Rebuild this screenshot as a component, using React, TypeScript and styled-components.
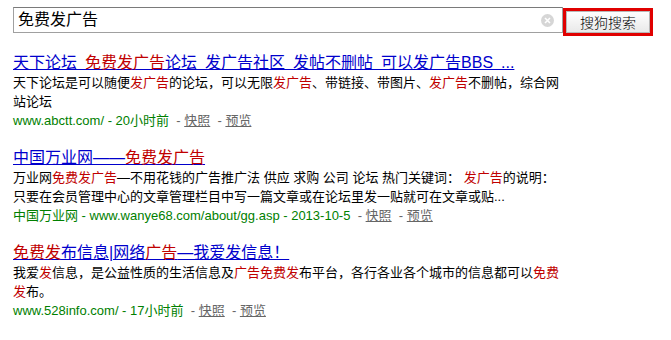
import React from 'react';
import styled, { createGlobalStyle } from 'styled-components';

const GlobalStyle = createGlobalStyle`
  html, body {
    margin: 0;
    padding: 0;
    background: #ffffff;
  }
  body {
    font-family: "Liberation Sans", Arial, "Noto Sans CJK SC", sans-serif;
    color: #000000;
  }
`;

const Page = styled.div`
  width: 671px;
  height: 340px;
  box-sizing: border-box;
  padding: 7px 0 0 13px;
  overflow: hidden;
`;

const SearchBar = styled.div`
  display: flex;
  align-items: flex-start;
  height: 30px;
`;

const InputWrap = styled.div`
  position: relative;
  width: 550px;
  height: 26px;
  box-sizing: border-box;
  border: 1px solid #a0a0a0;
  border-top-color: #7a7a7a;
  display: flex;
  align-items: center;
  padding-left: 4px;
`;

const Query = styled.span`
  font-size: 16px;
  line-height: 24px;
  color: #000;
`;

const Clear = styled.span`
  position: absolute;
  right: 8px;
  top: 6px;
  width: 13px;
  height: 13px;
  border-radius: 50%;
  background: #d6d6d6;
  display: flex;
  align-items: center;
  justify-content: center;
`;

const SearchButton = styled.button`
  margin-top: 1px;
  width: 90px;
  height: 28px;
  box-sizing: border-box;
  border: 3px solid #e00000;
  padding: 0;
  background: linear-gradient(#ffffff, #e8e8e8);
  box-shadow: inset 0 0 0 1px #b8b8b8;
  font-family: "Liberation Sans", "Noto Sans CJK SC", sans-serif;
  font-size: 14px;
  font-weight: 300;
  color: #000;
  cursor: pointer;
`;

const Results = styled.div`
  margin-top: 16px;
  display: flex;
  flex-direction: column;
  gap: 18px;
`;

const Result = styled.div`
  display: flex;
  flex-direction: column;
`;

const Title = styled.a`
  align-self: flex-start;
  font-size: 16px;
  line-height: 20px;
  color: #0000cc;
  text-decoration: underline;
  white-space: pre;
`;

const Em = styled.span`
  color: #c00000;
`;

const Snippet = styled.div`
  font-size: 13px;
  line-height: 19px;
  color: #000;
  white-space: pre;
`;

const Meta = styled.div`
  font-size: 13px;
  line-height: 19px;
  color: #008000;
  white-space: pre;
`;

const Sep = styled.span`
  color: #666;
`;

const MetaLink = styled.a`
  color: #666;
  text-decoration: underline;
`;

type Part = string | { em: string };

const renderParts = (parts: Part[]) =>
  parts.map((p, i) =>
    typeof p === 'string' ? <React.Fragment key={i}>{p}</React.Fragment> : <Em key={i}>{p.em}</Em>
  );

type Item = {
  title: Part[];
  lines: Part[][];
  meta: string;
};

const items: Item[] = [
  {
    title: ['天下论坛\u2002', { em: '免费发广告' }, '论坛\u2002发广告社区\u2002发帖不删帖\u2002可以发广告BBS\u2002...'],
    lines: [
      ['天下论坛是可以随便', { em: '发广告' }, '的论坛，可以无限', { em: '发广告' }, '、带链接、带图片、', { em: '发广告' }, '不删帖，综合网'],
      ['站论坛'],
    ],
    meta: 'www.abctt.com/ - 20小时前',
  },
  {
    title: ['中国万业网——', { em: '免费发广告' }],
    lines: [
      ['万业网', { em: '免费发广告' }, '—不用花钱的广告推广法 供应 求购 公司 论坛 热门关键词： ', { em: '发广告' }, '的说明：'],
      ['只要在会员管理中心的文章管理栏目中写一篇文章或在论坛里发一贴就可在文章或贴...'],
    ],
    meta: '中国万业网 - www.wanye68.com/about/gg.asp - 2013-10-5',
  },
  {
    title: [{ em: '免费发' }, '布信息|网络', { em: '广告' }, '—我爱发信息！'],
    lines: [
      ['我爱', { em: '发' }, '信息，是公益性质的生活信息及', { em: '广告免费发' }, '布平台，各行各业各个城市的信息都可以', { em: '免费' }],
      [{ em: '发' }, '布。'],
    ],
    meta: 'www.528info.com/ - 17小时前',
  },
];

export default function App() {
  return (
    <Page>
      <GlobalStyle />
      <SearchBar>
        <InputWrap>
          <Query>免费发广告</Query>
          <Clear>
            <svg width="7" height="7" viewBox="0 0 7 7">
              <path d="M1 1L6 6M6 1L1 6" stroke="#ffffff" strokeWidth="1.6" />
            </svg>
          </Clear>
        </InputWrap>
        <SearchButton>搜狗搜索</SearchButton>
      </SearchBar>
      <Results>
        {items.map((item, i) => (
          <Result key={i}>
            <Title href="#">{renderParts(item.title)}</Title>
            {item.lines.map((line, j) => (
              <Snippet key={j}>{renderParts(line)}</Snippet>
            ))}
            <Meta>
              {item.meta}
              <Sep>{'  - '}</Sep>
              <MetaLink href="#">快照</MetaLink>
              <Sep>{'  - '}</Sep>
              <MetaLink href="#">预览</MetaLink>
            </Meta>
          </Result>
        ))}
      </Results>
    </Page>
  );
}
